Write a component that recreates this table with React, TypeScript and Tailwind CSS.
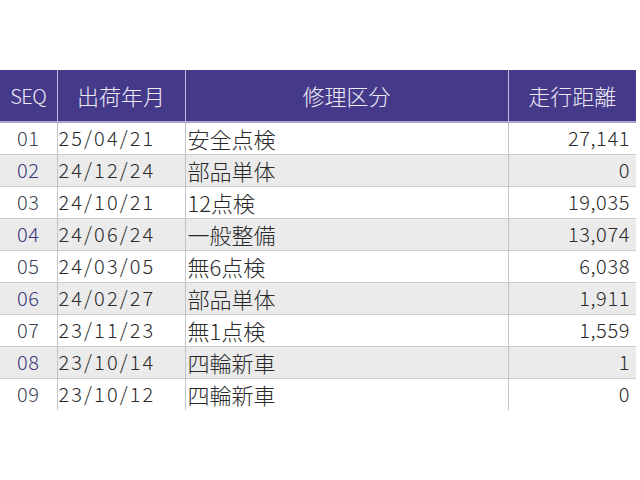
import React from 'react';

const rows = [
  { seq: '01', date: '25/04/21', kind: '安全点検', km: '27,141' },
  { seq: '02', date: '24/12/24', kind: '部品単体', km: '0' },
  { seq: '03', date: '24/10/21', kind: '12点検', km: '19,035' },
  { seq: '04', date: '24/06/24', kind: '一般整備', km: '13,074' },
  { seq: '05', date: '24/03/05', kind: '無6点検', km: '6,038' },
  { seq: '06', date: '24/02/27', kind: '部品単体', km: '1,911' },
  { seq: '07', date: '23/11/23', kind: '無1点検', km: '1,559' },
  { seq: '08', date: '23/10/14', kind: '四輪新車', km: '1' },
  { seq: '09', date: '23/10/12', kind: '四輪新車', km: '0' },
];

const jp = "font-['Noto_Sans_CJK_JP','Liberation_Sans',sans-serif]";

export default function App() {
  return (
    <div className="w-[640px] h-[480px] bg-white pt-[70px]">
      <table className={`w-[636px] table-fixed border-collapse ${jp}`}>
        <colgroup>
          <col className="w-[57px]" />
          <col className="w-[128px]" />
          <col className="w-[323px]" />
          <col className="w-[128px]" />
        </colgroup>
        <thead>
          <tr className="h-[52px] bg-[#45398a] text-[#ecebf5] border-b-2 border-[#aaa6cc] font-light">
            <th className="font-light text-[20px] tracking-[-0.5px] border-r border-[#c4c0dc]">SEQ</th>
            <th className="font-light text-[22px] border-r border-[#c4c0dc]">出荷年月</th>
            <th className="font-light text-[22px] border-r border-[#c4c0dc]">修理区分</th>
            <th className="font-light text-[22px]">走行距離</th>
          </tr>
        </thead>
        <tbody className="font-light">
          {rows.map((r, i) => (
            <tr
              key={r.seq}
              className={`h-[32px] ${i % 2 === 1 ? 'bg-[#ebebeb]' : 'bg-white'} ${i < rows.length - 1 ? 'border-b border-[#cbcbcb]' : ''}`}
            >
              <td className={`text-center text-[20px] leading-none tracking-[0.5px] border-r border-[#c4c4c4] ${i % 2 === 1 ? 'text-[#3a3a7a]' : 'text-[#3c4656]'}`}>
                {r.seq}
              </td>
              <td className="pl-[1px] text-[20px] leading-none tracking-[2.1px] text-[#2a2a2a] border-r border-[#c4c4c4]">
                {r.date}
              </td>
              <td className="pl-[2px] text-[22px] leading-none text-[#2a2a2a] border-r border-[#c4c4c4]">
                {r.kind}
              </td>
              <td className="pr-[6px] text-right text-[20px] leading-none tracking-[0.6px] text-[#2a2a2a]">
                {r.km}
              </td>
            </tr>
          ))}
        </tbody>
      </table>
    </div>
  );
}
